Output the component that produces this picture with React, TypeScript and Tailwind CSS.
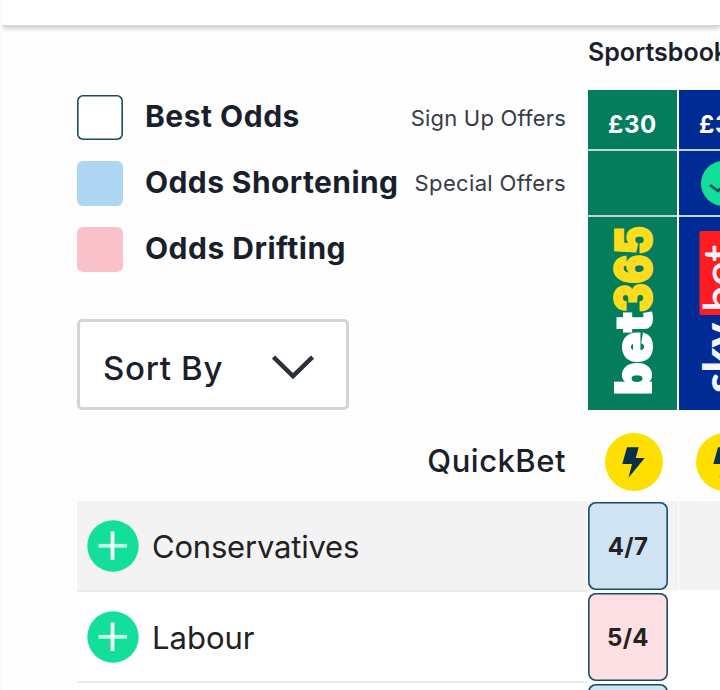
import type { ReactNode } from "react";

function Label({ children, className }: { children: ReactNode; className: string }) {
  return <span className={`block whitespace-nowrap ${className}`}>{children}</span>;
}

function Legend({ swatch, children }: { swatch: string; children: ReactNode }) {
  return (
    <div className="flex h-[66px] items-center gap-[22px]">
      <span className={`h-[45px] w-[46px] shrink-0 rounded-[6px] ${swatch}`} />
      <div className="pb-px">{children}</div>
    </div>
  );
}

function Bolt() {
  return (
    <svg className="block h-[58px] w-[58px] shrink-0" viewBox="0 0 58 58">
      <circle cx="29" cy="29" r="29" fill="#ffdf00" />
      <path d="M22 14.3h11.700L30.800 25H39.700L23.500 44.700L27 31H17.300z" fill="#08304b" />
    </svg>
  );
}

function Plus() {
  return (
    <svg className="block h-[52px] w-[52px] shrink-0" viewBox="0 0 52 52">
      <circle cx="26" cy="26" r="25.7" fill="#13df9b" />
      <path d="M11.5 25.8h28.5" stroke="#c4f7e5" strokeWidth="3.8" />
      <path d="M25.5 11.5v28.5" stroke="#f4fffb" strokeWidth="3.8" />
    </svg>
  );
}

function Bet365Logo() {
  return (
    <svg className="block h-[193px] w-[89px]" viewBox="0 0 89 193">
      <g transform="translate(63 178) rotate(-90)" fontFamily="Inter, sans-serif" fontWeight="900" fontSize="50">
        <text x="0" y="0" fill="#fff" stroke="#fff" strokeWidth="2" textLength="83" lengthAdjust="spacingAndGlyphs">bet</text>
        <text x="83" y="0" fill="#fbdd1d" stroke="#fbdd1d" strokeWidth="2" textLength="86" lengthAdjust="spacingAndGlyphs">365</text>
      </g>
    </svg>
  );
}

function SkyBetLogo() {
  return (
    <svg className="block h-[193px] w-[89px]" viewBox="0 0 89 193">
      <rect x="20.500" y="14" width="56" height="84" rx="2" fill="#ff1d22" />
      <g transform="translate(57 175) rotate(-90)" fontFamily="Lato, sans-serif" fill="#f4f4fa">
        <text x="-1" y="0" fontSize="45" fontWeight="900" textLength="70" lengthAdjust="spacingAndGlyphs">sky</text>
        <text x="80" y="0" fontSize="44" fontWeight="400" stroke="#f4f4fa" strokeWidth="0.600" textLength="67" lengthAdjust="spacingAndGlyphs">bet</text>
      </g>
    </svg>
  );
}

function Book({ color, offer, special, logo }: { color: string; offer: ReactNode; special?: ReactNode; logo: ReactNode }) {
  return (
    <div className="flex w-[89px] shrink-0 flex-col gap-[2px] bg-[#bed6da]">
      <div className={`flex h-[59px] items-center justify-center pt-[10px] ${color}`}>{offer}</div>
      <div className={`flex h-[64px] items-center justify-center ${color}`}>{special}</div>
      <div className={`h-[193px] ${color}`}>{logo}</div>
    </div>
  );
}

function Row({ name, odds, shaded, tint }: { name?: ReactNode; odds?: ReactNode; shaded?: boolean; tint: string }) {
  const bg = shaded ? "bg-[#f3f3f3]" : "bg-white";
  return (
    <div className="flex h-[91px] shrink-0">
      <div className={`flex w-[510px] shrink-0 items-center gap-[13px] border-b-2 border-[#ebebeb] pl-[10px] ${bg}`}>
        {name && <Plus />}
        {name}
      </div>
      <div className={`mb-[2px] ml-[1px] w-[90px] shrink-0 ${bg}`}>
        <div className={`mt-[1px] flex h-[88px] w-[80px] items-center justify-center rounded-[8px] pt-[2px] shadow-[inset_0_0_0_1.6px_#194b63] ${tint}`}>{odds}</div>
      </div>
      <div className={`mb-[2px] ml-[1px] w-[42px] shrink-0 ${bg}`} />
    </div>
  );
}

export default function App() {
  return (
    <div className="flex h-[690px] w-[720px] flex-col overflow-hidden border-l-2 border-[#fafafa] bg-[#fefefe] font-['Inter','Liberation_Sans',sans-serif] text-[#1a1f2c]">
      <header className="h-[26px] shrink-0 border-b border-[#d6d6d6] bg-white shadow-[0_2px_5px_rgba(0,0,0,0.22)]" />
      <main className="flex flex-col pl-[75px]">
        <div className="flex h-[475px] shrink-0">
          <div className="flex w-[489px] shrink-0 flex-col">
            <div className="flex h-[256px] justify-between pt-[58px]">
              <div className="w-[330px] shrink-0">
                <Legend swatch="bg-white shadow-[inset_0_0_0_1.6px_#194b63]"><Label className="text-[30px] font-bold tracking-[0.5px]">Best Odds</Label></Legend>
                <Legend swatch="bg-[#aed5f2]"><Label className="text-[30px] font-bold tracking-[0.4px]">Odds Shortening</Label></Legend>
                <Legend swatch="bg-[#f9c1c9]"><Label className="text-[30px] font-bold tracking-[0.5px]">Odds Drifting</Label></Legend>
              </div>
              <div className="flex flex-col items-end text-[#363b47]">
                <Label className="text-[22px] leading-[68px] tracking-[0.2px]">Sign Up Offers</Label>
                <Label className="text-[22px] leading-[62px] tracking-[0.35px]">Special Offers</Label>
              </div>
            </div>
            <button className="mt-[37px] flex h-[91px] w-[272px] items-center justify-between rounded-[5px] border-[3px] border-[#d4d4d4] bg-white pl-[23px] pr-[32px]">
              <Label className="pt-[9px] text-[33px] font-medium tracking-[0.7px]">Sort By</Label>
              <svg className="mt-[6px] block h-[25px] w-[42px]" viewBox="0 0 42 25" fill="none" stroke="#2b303c" strokeWidth="4.5"><path d="M1.5 2L21 21L40.5 2" /></svg>
            </button>
            <div className="mt-[24px] flex h-[54px] items-center justify-end"><Label className="text-[31px] font-medium tracking-[0.5px]">QuickBet</Label></div>
          </div>
          <div className="ml-[22px] flex shrink-0 flex-col">
            <Label className="h-[64px] pt-[8px] text-[25px] font-semibold leading-[36px]">Sportsbooks</Label>
            <div className="flex h-[320px] gap-[2px]">
              <Book color="bg-[#047d5c]" offer={<Label className="text-[24px] font-bold tracking-[0.6px] text-white">£30</Label>} logo={<Bet365Logo />} />
              <Book
                color="bg-[#002b94]"
                offer={<Label className="text-[24px] font-bold tracking-[0.6px] text-white">£30</Label>}
                special={<svg className="block h-[45px] w-[45px]" viewBox="0 0 45 45"><circle cx="22.5" cy="22.5" r="22.5" fill="#13df9b" /><path d="M9 24l8 6L33 14" fill="none" stroke="#0a4f60" strokeWidth="2.6" /></svg>}
                logo={<SkyBetLogo />}
              />
            </div>
            <div className="mt-[23px] flex gap-[33px] pl-[17px]"><Bolt /><Bolt /></div>
          </div>
        </div>
        <Row shaded tint="bg-[#d0e3f2]" name={<Label className="pt-[4px] text-[31px] tracking-[-0.2px] text-[#222]">Conservatives</Label>} odds={<Label className="text-[24px] font-bold tracking-[0.3px] text-[#222]">4/7</Label>} />
        <Row tint="bg-[#fde0e4]" name={<Label className="pt-[4px] text-[31px] text-[#222]">Labour</Label>} odds={<Label className="text-[24px] font-bold tracking-[0.3px] text-[#222]">5/4</Label>} />
        <Row tint="bg-[#d0e3f2]" />
      </main>
    </div>
  );
}
